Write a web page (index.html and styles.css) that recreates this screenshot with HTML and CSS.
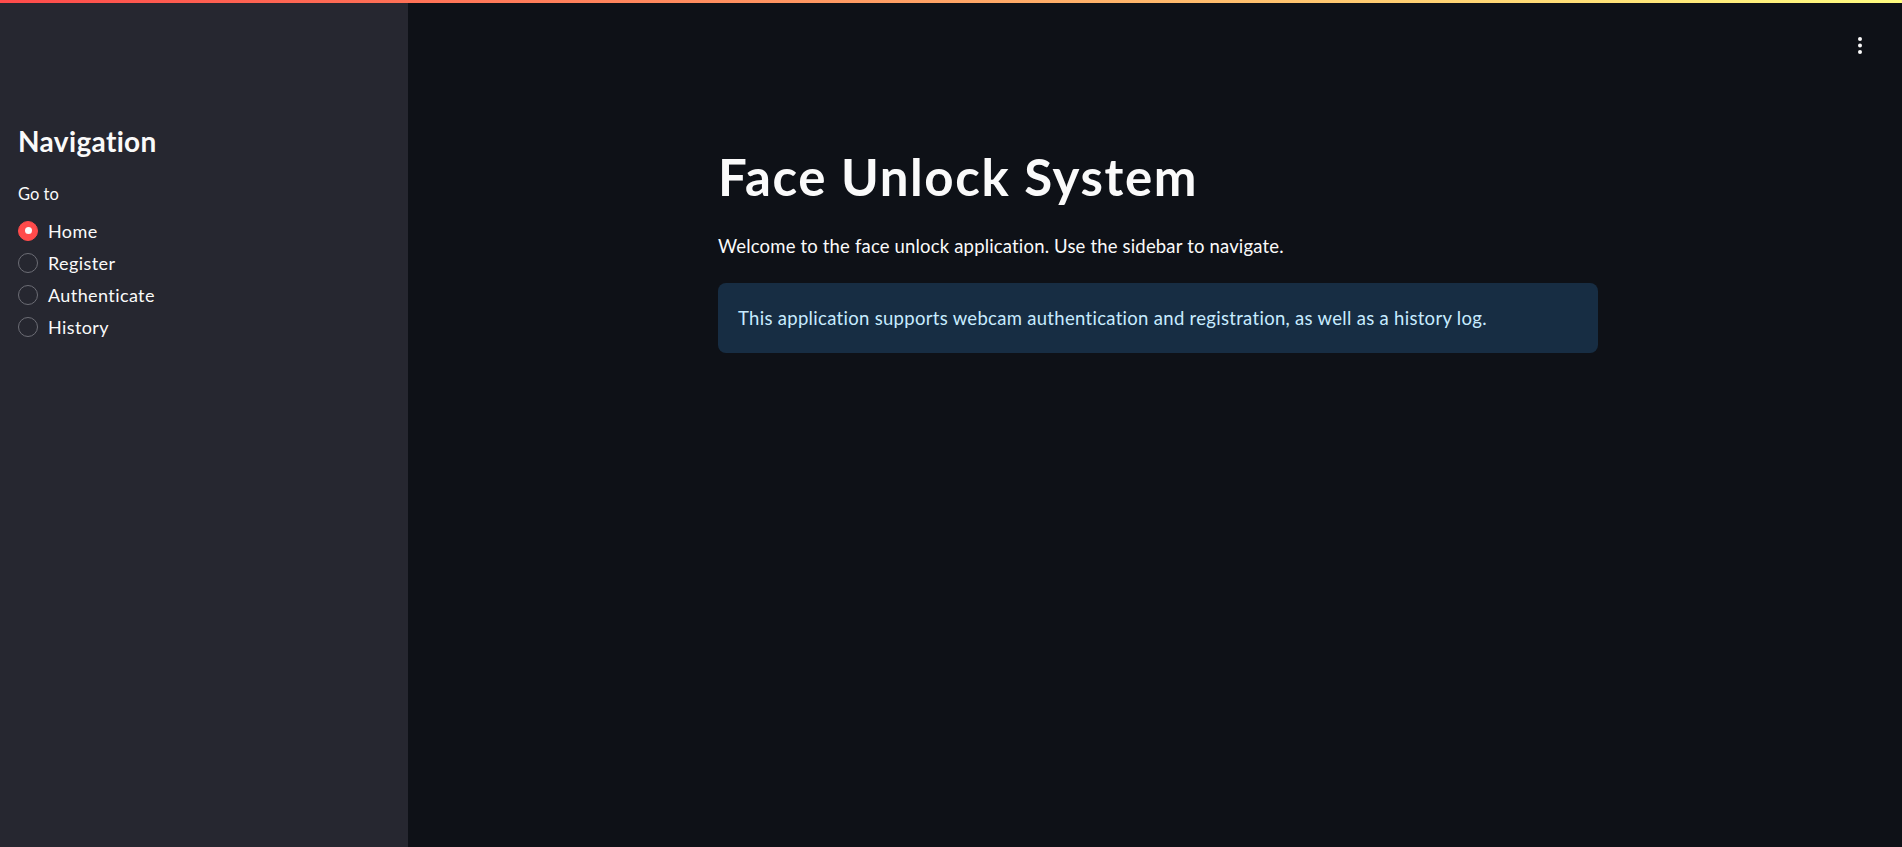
FILE: index.html
```html
<!DOCTYPE html>
<html lang="en">
<head>
<meta charset="utf-8">
<title>Face Unlock System</title>
<link rel="stylesheet" href="styles.css">
</head>
<body>
<div class="decoration"></div>
<div class="app">
  <aside class="sidebar">
    <h2 class="side-title">Navigation</h2>
    <div class="radio-label">Go to</div>
    <div class="radio-group">
      <label class="radio checked"><span class="dot"></span><span class="radio-text">Home</span></label>
      <label class="radio"><span class="dot"></span><span class="radio-text">Register</span></label>
      <label class="radio"><span class="dot"></span><span class="radio-text">Authenticate</span></label>
      <label class="radio"><span class="dot"></span><span class="radio-text">History</span></label>
    </div>
  </aside>
  <main class="main">
    <header class="toolbar">
      <svg class="kebab" width="4" height="17" viewBox="0 0 4 17"><circle cx="2" cy="2" r="2" fill="#fafafa"/><circle cx="2" cy="8.5" r="2" fill="#fafafa"/><circle cx="2" cy="15" r="2" fill="#fafafa"/></svg>
    </header>
    <section class="block">
      <h1 class="title">Face Unlock System</h1>
      <p class="lead">Welcome to the face unlock application. Use the sidebar to navigate.</p>
      <div class="info">This application supports webcam authentication and registration, as well as a history log.</div>
    </section>
  </main>
</div>
</body>
</html>
```
FILE: styles.css
```css
* { box-sizing: border-box; }
html, body { margin: 0; padding: 0; height: 100%; }
body {
  background: #0e1117;
  color: #fafafa;
  font-family: Lato, "Noto Sans", sans-serif;
  overflow: hidden;
}
.decoration {
  position: fixed;
  top: 0; left: 0; right: 0;
  height: 3px;
  background: linear-gradient(90deg, #ff4b4b, #fffd80);
  z-index: 10;
}
.app {
  display: flex;
  height: 847px;
}
.sidebar {
  width: 408px;
  flex: 0 0 408px;
  background: #262730;
  padding: 123px 18px 0 18px;
}
.side-title {
  margin: 0;
  font-size: 28px;
  line-height: 36px;
  font-weight: 700;
  letter-spacing: 0.35px;
}
.radio-label {
  margin-top: 23.6px;
  font-size: 16.5px;
  line-height: 22px;
}
.radio-group {
  margin-top: 10px;
  display: flex;
  flex-direction: column;
}
.radio {
  display: flex;
  align-items: center;
  gap: 10px;
  height: 32px;
  font-size: 18px;
  line-height: 32px;
  letter-spacing: 0.4px;
}
.dot {
  width: 20px;
  height: 20px;
  border-radius: 50%;
  border: 1.5px solid #6c6d75;
  flex: 0 0 20px;
  display: flex;
  align-items: center;
  justify-content: center;
}
.radio.checked .dot {
  background: #ff4b4b;
  border-color: #ff4b4b;
}
.radio.checked .dot::after {
  content: "";
  width: 7px;
  height: 7px;
  border-radius: 50%;
  background: #fafafa;
}
.main {
  flex: 1;
  display: flex;
  flex-direction: column;
}
.toolbar {
  height: 60px;
  display: flex;
  justify-content: flex-end;
  align-items: flex-start;
  padding: 37px 40px 0 0;
}
.block {
  width: 880px;
  margin: 87px 0 0 310px;
}
.title {
  margin: 0;
  font-size: 51px;
  line-height: 60px;
  font-weight: 700;
  letter-spacing: 1.6px;
}
.lead {
  margin: 25px 0 0;
  font-size: 18.5px;
  line-height: 28px;
  letter-spacing: 0.17px;
}
.info {
  margin-top: 23px;
  background: #172d43;
  color: #c7ebff;
  border-radius: 8px;
  padding: 21px 20px;
  font-size: 18.5px;
  line-height: 28px;
  letter-spacing: 0.3px;
}
```
